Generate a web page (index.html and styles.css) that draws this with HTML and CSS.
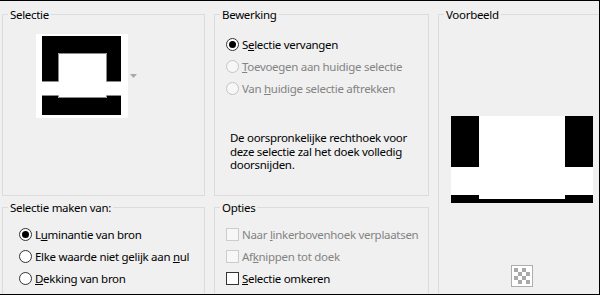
FILE: index.html
```html
<!DOCTYPE html>
<html lang="nl">
<head>
  <meta charset="UTF-8">
  <title>Selectie uit masker</title>
  <link rel="stylesheet" href="styles.css">
</head>
<body>

<div class="dialog">
  <section class="group">
    <span class="group-title">Selectie</span>
    <div class="source">
      <svg class="thumb" width="92" height="84" viewBox="0 0 92 84">
        <rect width="92" height="84" fill="#fff"/>
        <path d="M6 2H85V47H71V19H22V47H6Z" fill="#000"/>
        <path d="M6 62H22V64H71V62H85V81H6Z" fill="#000"/>
        <path d="M6 47.5H22.5V19.5H70.5V47.5H85M6 61.5H22.5V63.5H70.5V61.5H85" fill="none" stroke="#8a8a8a" stroke-width="1"/>
      </svg>
      <svg class="drop" width="7" height="4" viewBox="0 0 7 4">
        <path d="M0 0H7L3.5 4Z" fill="#a8a8a8"/>
      </svg>
    </div>
  </section>

  <section class="group edit">
    <span class="group-title">Bewerking</span>
    <label class="opt"><span class="radio checked"></span><span>S<u>e</u>lectie vervangen</span></label>
    <label class="opt disabled"><span class="radio"></span><span><u>T</u>oevoegen aan huidige selectie</span></label>
    <label class="opt disabled"><span class="radio"></span><span>Van <u>h</u>uidige selectie aftrekken</span></label>
    <p class="note">De oorspronkelijke rechthoek voor deze selectie zal het doek volledig doorsnijden.</p>
  </section>

  <section class="group preview">
    <span class="group-title">Voorbeeld</span>
    <svg class="preview-img" width="142" height="87" viewBox="0 0 142 87">
      <rect width="142" height="87" fill="#fff"/>
      <rect x="0" y="0" width="28" height="51" fill="#000"/>
      <rect x="114" y="0" width="28" height="51" fill="#000"/>
      <path d="M0 79H28V83H114V79H142V87H0Z" fill="#000"/>
    </svg>
    <div class="preview-tools">
      <svg width="22" height="22" viewBox="0 0 22 22">
        <rect x="0.5" y="0.5" width="21" height="21" fill="#fff" stroke="#adadad"/>
        <rect x="3" y="3" width="16" height="16" fill="#fff"/>
        <path d="M3 3h4v4H3zM11 3h4v4h-4zM7 7h4v4H7zM15 7h4v4h-4zM3 11h4v4H3zM11 11h4v4h-4zM7 15h4v4H7zM15 15h4v4h-4z" fill="#a9a9a9"/>
      </svg>
    </div>
  </section>

  <section class="group make">
    <span class="group-title">Selectie maken van:</span>
    <label class="opt"><span class="radio checked"></span><span>L<u>u</u>minantie van bron</span></label>
    <label class="opt"><span class="radio"></span><span>Elke waarde niet gelijk aan <u>n</u>ul</span></label>
    <label class="opt"><span class="radio"></span><span><u>D</u>ekking van bron</span></label>
  </section>

  <section class="group options">
    <span class="group-title">Opties</span>
    <label class="opt disabled"><span class="check"></span><span>Naar <u>l</u>inkerbovenhoek verplaatsen</span></label>
    <label class="opt disabled"><span class="check"></span><span>Af<u>k</u>nippen tot doek</span></label>
    <label class="opt"><span class="check"></span><span><u>S</u>electie omkeren</span></label>
  </section>
</div>

</body>
</html>
```

FILE: styles.css
```css
body {
  margin: 0;
  font-family: "Noto Sans", "Open Sans", sans-serif;
  font-size: 11.5px;
  letter-spacing: -0.3px;
  color: #000;
}
.dialog {
  box-sizing: border-box;
  width: 600px;
  height: 295px;
  padding: 13px 0 0 2px;
  background-color: #f0f0f0;
  border-top: 1px solid #000;
  border-right: 1px solid #000;
  border-bottom: 1px solid #000;
  overflow: hidden;
  display: grid;
  grid-template-columns: 203px 215px 170px;
  grid-template-rows: 182px 100px;
  column-gap: 9px;
  row-gap: 11px;
}
.group {
  position: relative;
  box-sizing: border-box;
  border: 1px solid #dcdcdc;
}
.group-title {
  position: absolute;
  top: -8px;
  left: 5px;
  padding: 0 2px;
  line-height: 15px;
  background-color: #f0f0f0;
  white-space: nowrap;
}
.source {
  display: flex;
  align-items: center;
  gap: 2px;
  margin: 19px 0 0 33px;
}
.thumb {
  display: block;
}
.drop {
  display: block;
}
.edit {
  padding: 18px 0 0 11px;
}
.make {
  padding: 15px 0 0 16px;
}
.options {
  padding: 15px 0 0 11px;
}
.opt {
  display: flex;
  align-items: center;
  height: 22px;
  white-space: nowrap;
}
.opt.disabled {
  color: #838383;
}
.radio {
  box-sizing: border-box;
  flex: none;
  width: 13px;
  height: 13px;
  margin-right: 3px;
  border: 1px solid #333;
  border-radius: 50%;
  background-color: #fff;
  display: flex;
  align-items: center;
  justify-content: center;
}
.radio.checked::after {
  content: "";
  width: 7px;
  height: 7px;
  border-radius: 50%;
  background-color: #000;
}
.disabled .radio {
  border-color: #c4c4c4;
  background-color: #f7f7f7;
}
.check {
  box-sizing: border-box;
  flex: none;
  width: 13px;
  height: 13px;
  margin-right: 3px;
  border: 1px solid #333;
  background-color: #fff;
}
.disabled .check {
  border-color: #cccccc;
  background-color: #f7f7f7;
}
.note {
  width: 190px;
  margin: 32px 0 0 4px;
  line-height: 13.5px;
}
.preview {
  grid-row: span 2;
  padding: 101px 0 0 12px;
}
.preview-img {
  display: block;
}
.preview-tools {
  width: 142px;
  margin-top: 62px;
  display: flex;
  justify-content: center;
}
.preview-tools svg {
  display: block;
}
```
